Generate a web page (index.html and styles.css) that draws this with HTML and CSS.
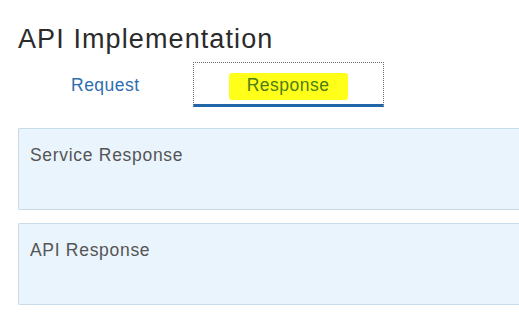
FILE: index.html
```html
<!DOCTYPE html>
<html lang="en">
<head>
  <meta charset="UTF-8">
  <meta name="viewport" content="width=device-width, initial-scale=1.0">
  <title>API Implementation</title>
  <link rel="stylesheet" href="styles.css">
</head>
<body>
  <div class="page">
    <h1 class="page-title">API Implementation</h1>

    <div class="tabs">
      <div class="tab">Request</div>
      <div class="tab active"><span class="marker">Response</span></div>
    </div>

    <div class="panels">
      <div class="panel">Service Response</div>
      <div class="panel">API Response</div>
    </div>
  </div>
</body>
</html>
```

FILE: styles.css
```css
* {
  margin: 0;
  padding: 0;
  box-sizing: border-box;
}
body {
  font-family: "Liberation Sans", Arial, sans-serif;
  background-color: #ffffff;
  color: #555;
}

.page {
  padding: 23px 0 0 18px;
}

.page-title {
  font-size: 27px;
  font-weight: normal;
  line-height: 32px;
  letter-spacing: 1.1px;
  color: #2b2b2b;
}

.tabs {
  display: flex;
  margin-top: 7px;
}
.tab {
  font-size: 17.5px;
  line-height: 20px;
  letter-spacing: 0.5px;
  color: #2f6eae;
  padding: 12px 52px 9px;
  border: 1px solid transparent;
  border-bottom: 3px solid transparent;
}
.tab.active {
  padding-left: 35px;
  padding-right: 35px;
  border: 1px dotted #6a6a6a;
  border-bottom: 3px solid #2166a8;
}
.marker {
  background-color: #ffff1a;
  color: #4b7d12;
  padding: 2px 18px 5px;
  border-radius: 3px;
}

.panels {
  display: flex;
  flex-direction: column;
  gap: 13px;
  margin-top: 21px;
}
/* panels run off the right edge of the frame, so no right border */
.panel {
  height: 82px;
  font-size: 17.5px;
  line-height: 20px;
  letter-spacing: 0.7px;
  color: #555;
  padding: 16px 11px;
  background-color: #e9f4fc;
  border: 1px solid #c8dbe8;
  border-right: none;
  border-radius: 2px 0 0 2px;
}
```
